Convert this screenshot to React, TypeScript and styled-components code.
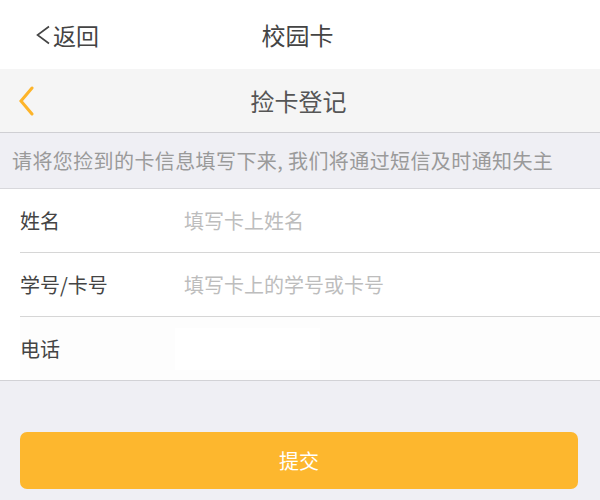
import React from "react";
import styled, { createGlobalStyle } from "styled-components";

const GlobalStyle = createGlobalStyle`
  body {
    margin: 0;
    background: #efeff4;
    font-family: "Noto Sans CJK SC", "Noto Sans", sans-serif;
  }
`;

const Page = styled.div`
  width: 600px;
  min-height: 500px;
  background: #efeff4;
`;

const TopBar = styled.div`
  height: 69px;
  background: #ffffff;
  display: grid;
  grid-template-columns: 1fr auto 1fr;
  align-items: center;
  padding: 0 0 0 35px;
  box-sizing: border-box;
`;

const BackLink = styled.div`
  display: flex;
  align-items: center;
  gap: 2px;
  color: #444;
  font-size: 23px;
  > svg {
    width: 16px;
    height: 20px;
  }
`;

const TopTitle = styled.div`
  color: #444;
  font-size: 24px;
  margin-right: 40px;
`;

const NavBar = styled.div`
  height: 64px;
  background: #f5f5f5;
  border-bottom: 1px solid #cfcfd3;
  display: grid;
  grid-template-columns: 1fr auto 1fr;
  align-items: center;
  padding-left: 18px;
  box-sizing: border-box;
  > svg {
    width: 16px;
    height: 30px;
  }
`;

const NavTitle = styled.div`
  color: #555;
  font-size: 24px;
  margin-right: 21px;
`;

const Notice = styled.div`
  height: 56px;
  display: flex;
  align-items: center;
  padding-left: 12px;
  color: #9a9a9a;
  font-size: 20px;
  letter-spacing: 0.4px;
  border-bottom: 1px solid #d8d8dc;
  box-sizing: border-box;
`;

const Form = styled.div`
  background: #ffffff;
  border-bottom: 1px solid #d2d2d6;
`;

const Row = styled.div<{ $last?: boolean; $tint?: boolean }>`
  height: 63px;
  display: flex;
  align-items: center;
  margin-left: 20px;
  background: ${(p) => (p.$tint ? "#fdfdfd" : "#ffffff")};
  border-bottom: ${(p) => (p.$last ? "none" : "1px solid #d6d6d6")};
`;

const Label = styled.div`
  width: 155px;
  color: #444;
  font-size: 20px;
`;

const Input = styled.input<{ $narrow?: boolean }>`
  border: none;
  outline: none;
  font-family: inherit;
  font-size: 20px;
  color: #333;
  padding: 0 0 0 9px;
  height: 42px;
  box-sizing: border-box;
  background: #ffffff;
  ${(p) => (p.$narrow ? "width: 145px;" : "flex: 1; background: transparent;")}
  &::placeholder {
    color: #bdbdbd;
  }
`;

const ButtonWrap = styled.div`
  padding: 51px 22px 0 20px;
`;

const SubmitButton = styled.button`
  width: 100%;
  height: 57px;
  border: none;
  border-radius: 7px;
  background: #fdb72e;
  color: #ffffff;
  font-family: inherit;
  font-size: 20px;
`;

export default function App() {
  return (
    <Page>
      <GlobalStyle />
      <TopBar>
        <BackLink>
          <svg viewBox="0 0 16 20" fill="none" stroke="#444" strokeWidth="1.6">
            <path d="M14 1.5 L2.5 10 L14 18.5" />
          </svg>
          返回
        </BackLink>
        <TopTitle>校园卡</TopTitle>
        <div />
      </TopBar>
      <NavBar>
        <svg viewBox="0 0 16 30" fill="none" stroke="#fdb42a" strokeWidth="3" strokeLinecap="round">
          <path d="M14 2 L3 15 L14 28" />
        </svg>
        <NavTitle>捡卡登记</NavTitle>
        <div />
      </NavBar>
      <Notice>请将您捡到的卡信息填写下来, 我们将通过短信及时通知失主</Notice>
      <Form>
        <Row>
          <Label>姓名</Label>
          <Input placeholder="填写卡上姓名" />
        </Row>
        <Row>
          <Label>学号/卡号</Label>
          <Input placeholder="填写卡上的学号或卡号" />
        </Row>
        <Row $last $tint>
          <Label>电话</Label>
          <Input $narrow />
        </Row>
      </Form>
      <ButtonWrap>
        <SubmitButton>提交</SubmitButton>
      </ButtonWrap>
    </Page>
  );
}
